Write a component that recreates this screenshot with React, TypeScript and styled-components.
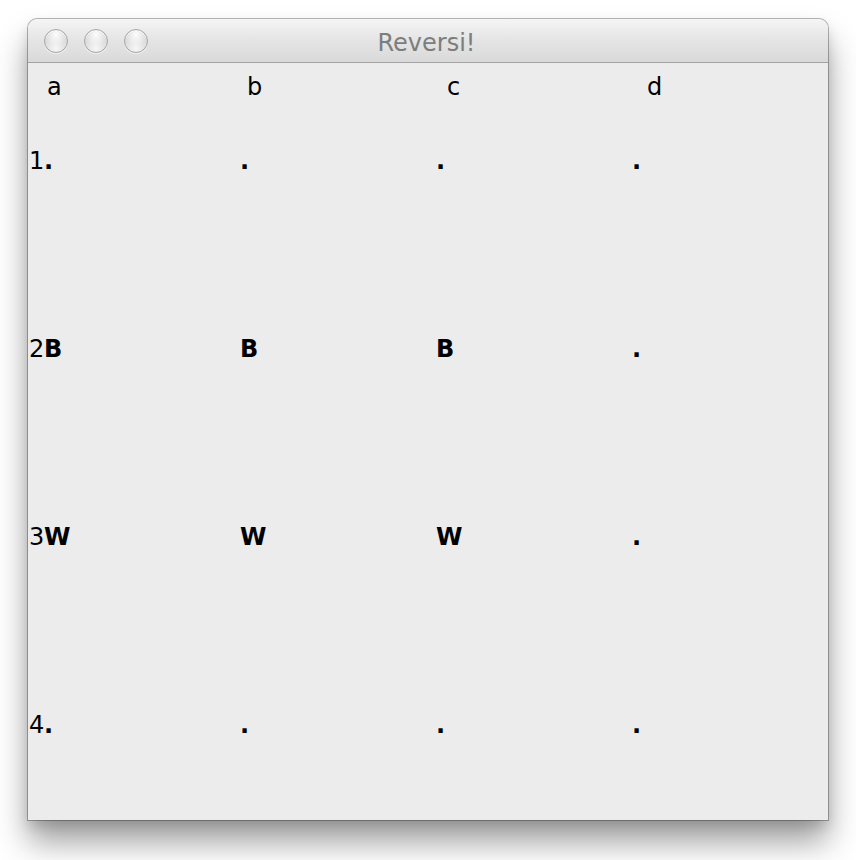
import React from "react";
import styled, { createGlobalStyle } from "styled-components";

const GlobalStyle = createGlobalStyle`
  html, body {
    margin: 0;
    padding: 0;
    background: #ffffff;
  }
  body {
    font-family: "DejaVu Sans", "Liberation Sans", sans-serif;
  }
`;

const Page = styled.div`
  padding: 19px 0 0 28px;
  width: 856px;
  height: 860px;
  box-sizing: border-box;
`;

const Window = styled.div`
  width: 800px;
  height: 801px;
  display: flex;
  flex-direction: column;
  background: #ececec;
  border-radius: 9px 9px 0 0;
  box-shadow: 0 0 0 1px rgba(0, 0, 0, 0.28), 0 22px 32px rgba(0, 0, 0, 0.38),
    0 6px 12px rgba(0, 0, 0, 0.12);
  overflow: hidden;
`;

const TitleBar = styled.div`
  height: 43px;
  flex: none;
  position: relative;
  display: flex;
  align-items: center;
  justify-content: center;
  background: linear-gradient(#f5f5f5, #e6e6e6 45%, #d9d9d9);
  border-bottom: 1px solid #a3a3a3;
  border-radius: 9px 9px 0 0;
`;

const Lights = styled.div`
  position: absolute;
  left: 16px;
  top: 10px;
  display: flex;
  gap: 16px;
`;

const Light = styled.div`
  width: 22px;
  height: 22px;
  border-radius: 50%;
  border: 1px solid #a6a6a6;
  background: radial-gradient(
      circle at 50% 20%,
      rgba(255, 255, 255, 0.95) 0,
      rgba(255, 255, 255, 0.2) 45%,
      rgba(255, 255, 255, 0) 55%
    ),
    radial-gradient(circle at 50% 85%, #f7f7f7 0, #dcdcdc 55%, #cfcfcf 100%);
  box-shadow: inset 0 1px 1px rgba(255, 255, 255, 0.8),
    0 1px 0 rgba(255, 255, 255, 0.6);
`;

const Title = styled.div`
  font-size: 24px;
  line-height: 28px;
  color: #7d7d7d;
  padding-top: 5px;
  margin-left: -3px;
`;

const Content = styled.div`
  flex: 1;
  display: flex;
  flex-direction: column;
  font-size: 24px;
  line-height: 28px;
  color: #000000;
  padding-top: 10px;
`;

const HeaderRow = styled.div`
  display: grid;
  grid-template-columns: repeat(4, 200px);
`;

const HeaderCell = styled.div`
  padding-left: 19px;
`;

const Board = styled.div`
  display: grid;
  row-gap: 160px;
  margin-top: 46px;
`;

const Row = styled.div`
  display: grid;
  grid-template-columns: 16px repeat(4, 196px);
`;

const RowLabel = styled.div`
  padding-left: 1px;
  font-weight: 400;
`;

const Cell = styled.div`
  font-weight: 700;
`;

const columns = ["a", "b", "c", "d"];
const board = [
  [".", ".", ".", "."],
  ["B", "B", "B", "."],
  ["W", "W", "W", "."],
  [".", ".", ".", "."],
];

export default function App() {
  return (
    <>
      <GlobalStyle />
      <Page>
        <Window>
          <TitleBar>
            <Lights>
              <Light />
              <Light />
              <Light />
            </Lights>
            <Title>Reversi!</Title>
          </TitleBar>
          <Content>
            <HeaderRow>
              {columns.map((c) => (
                <HeaderCell key={c}>{c}</HeaderCell>
              ))}
            </HeaderRow>
            <Board>
              {board.map((row, i) => (
                <Row key={i}>
                  <RowLabel>{i + 1}</RowLabel>
                  {row.map((v, j) => (
                    <Cell key={j}>{v}</Cell>
                  ))}
                </Row>
              ))}
            </Board>
          </Content>
        </Window>
      </Page>
    </>
  );
}
